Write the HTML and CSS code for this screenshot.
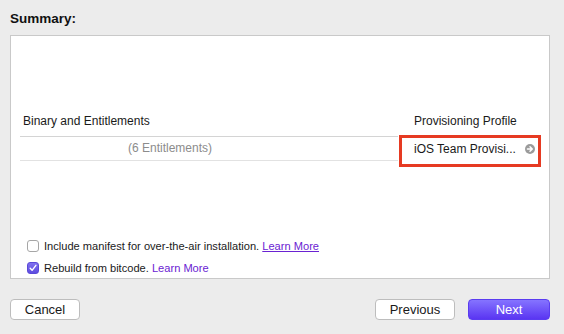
FILE: index.html
```html
<!DOCTYPE html>
<html>
<head>
<meta charset="utf-8">
<link rel="stylesheet" href="styles.css">
</head>
<body>
<div class="sheet">
  <h1 class="title">Summary:</h1>
  <div class="panel">
    <div class="table">
      <div class="cell head left">Binary and Entitlements</div>
      <div class="cell head right">Provisioning Profile</div>
      <div class="cell body left"><span class="muted">(6 Entitlements)</span></div>
      <div class="cell body right profile">
        <span class="profile-name">iOS Team Provisi...</span>
        <svg class="go" width="10" height="10" viewBox="0 0 10 10"><circle cx="5" cy="5" r="5" fill="#9b9b9b"/><path d="M2.4 5h4.6M5 2.7l2.3 2.3-2.3 2.3" stroke="#fff" stroke-width="1.4" fill="none" stroke-linecap="round" stroke-linejoin="round"/></svg>
      </div>
    </div>
    <div class="options">
      <label class="option"><span class="box"></span>Include manifest for over-the-air installation. <a class="link underline">Learn More</a></label>
      <label class="option"><span class="box checked"><svg width="8" height="8" viewBox="0 0 8 8"><path d="M1.2 4.3l1.9 2 3.8-5" stroke="#fff" stroke-width="1.4" fill="none" stroke-linecap="round" stroke-linejoin="round"/></svg></span>Rebuild from bitcode. <a class="link">Learn More</a></label>
    </div>
  </div>
  <div class="footer">
    <button class="btn cancel">Cancel</button>
    <div class="spacer"></div>
    <button class="btn previous">Previous</button>
    <button class="btn next">Next</button>
  </div>
</div>
</body>
</html>
```

FILE: styles.css
```css
html, body {
  margin: 0;
  padding: 0;
  background: #ececec;
}
body {
  font-family: "Liberation Sans", Arial, sans-serif;
  font-size: 12px;
  color: #1a1a1a;
  width: 564px;
  height: 334px;
  overflow: hidden;
}
.sheet {
  padding: 11px 14px 0 10px;
}
.title {
  margin: 0 0 8px;
  font-size: 13.5px;
  line-height: 16px;
  font-weight: bold;
  color: #111;
}
.panel {
  box-sizing: border-box;
  height: 244px;
  background: #fff;
  border: 1px solid #c9c9c9;
  padding: 0 7px 0 9px;
  display: flex;
  flex-direction: column;
}
.table {
  margin-top: 76px;
  display: grid;
  grid-template-columns: 378px 143px;
}
.cell {
  line-height: 14px;
  white-space: nowrap;
}
.head {
  padding: 2px 0 8px;
}
.head.left {
  padding-left: 3px;
  border-bottom: 1px solid #d4d4d4;
}
.head.right {
  padding-left: 16px;
}
.body {
  padding: 4px 0 5px;
}
.body.left {
  padding-left: 108px;
  border-bottom: 1px solid #e2e2e2;
}
.muted {
  color: #8c8c8c;
}
.profile {
  position: relative;
  display: flex;
  align-items: center;
  padding-left: 16px;
}
.profile-name {
  flex: 1;
}
.go {
  margin-right: 6px;
  margin-top: 0;
}
.profile::after {
  content: "";
  position: absolute;
  left: 1px;
  top: -2px;
  width: 142px;
  height: 32px;
  box-sizing: border-box;
  border: 3px solid #e63a22;
}
.options {
  margin-top: auto;
  padding: 0 0 0 7px;
  display: flex;
  flex-direction: column;
  gap: 2px;
  font-size: 11.1px;
}
.option {
  display: flex;
  align-items: center;
  height: 20px;
  white-space: pre;
}
.box {
  box-sizing: border-box;
  width: 12px;
  height: 12px;
  border: 1px solid #a6a6a6;
  border-radius: 3px;
  background: #fff;
  margin-right: 5px;
  display: flex;
  align-items: center;
  justify-content: center;
}
.box.checked {
  border-color: #5a49d8;
  background: linear-gradient(#7f70ee, #5e4de0);
}
.link {
  color: #6a22d2;
}
.underline {
  text-decoration: underline;
}
.footer {
  margin-top: 20px;
  display: flex;
  align-items: center;
}
.spacer {
  flex: 1;
}
.btn {
  box-sizing: border-box;
  height: 21px;
  font-family: "Liberation Sans", Arial, sans-serif;
  font-size: 13px;
  line-height: 19px;
  padding: 0;
  border-radius: 4px;
  border: 1px solid #bdbdbd;
  background: #fff;
  color: #1a1a1a;
}
.cancel {
  width: 70px;
}
.previous {
  width: 80px;
  margin-right: 13px;
}
.next {
  width: 82px;
  border-color: #5a3cf0;
  color: #fff;
  background: linear-gradient(#8574ff, #5a35f2);
}
```
